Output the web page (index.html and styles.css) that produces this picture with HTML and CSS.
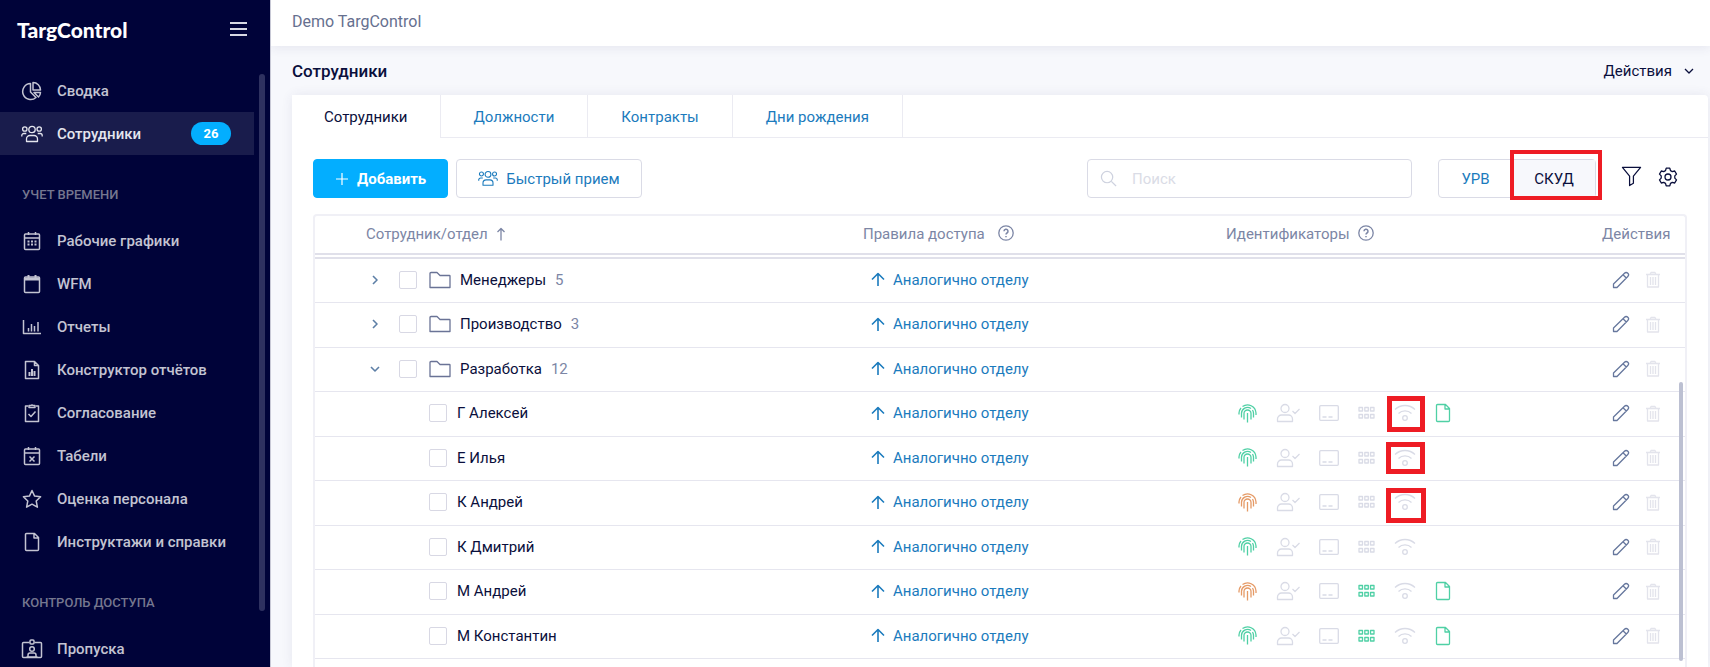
FILE: index.html
```html
<!DOCTYPE html>
<html lang="ru">
<head>
    <meta charset="UTF-8">
    <meta name="viewport" content="width=device-width, initial-scale=1.0">
    <title>Сотрудники - TargControl</title>
    <link rel="stylesheet" href="styles.css">
</head>
<body>
    <!-- icon set -->
    <svg class="sprite" aria-hidden="true">
        <symbol id="i-pie" viewBox="0 0 20 20"><path d="M8.5 2.5a8 8 0 1 0 5.5 14L8.500 11z"/><path d="M11 1.500v7.500h7.500a7.500 7.500 0 0 0-7.500-7.500z"/><path d="M12 11.500h6.500a7 7 0 0 1-2 4.500z"/></symbol>
        <symbol id="i-team" viewBox="0 0 22 18"><circle cx="11" cy="4.500" r="3.200"/><circle cx="3.800" cy="4" r="2.200"/><circle cx="18.200" cy="4" r="2.200"/><path d="M5.500 16.500v-2.500a3.500 3.500 0 0 1 3.500-3.500h4a3.500 3.500 0 0 1 3.500 3.500v2.500zM.8 11.500v-1a2 2 0 0 1 2-2h2.500M21.200 11.500v-1a2 2 0 0 0-2-2h-2.500"/></symbol>
        <symbol id="i-calendar" viewBox="0 0 18 20"><rect x="1.500" y="3" width="15" height="15.500" rx="1"/><path d="M1.500 7h15M5.500 1v3M12.500 1v3"/><path d="M4.500 10.500h9M4.500 13.500h9" stroke-width="2" stroke-dasharray="2 1.500"/></symbol>
        <symbol id="i-calendar-empty" viewBox="0 0 18 20"><rect x="1.500" y="3" width="15" height="15.500" rx="1"/><path d="M1.500 5h15" stroke-width="3"/><path d="M5.500 1v3M12.500 1v3" stroke-width="2"/></symbol>
        <symbol id="i-chart" viewBox="0 0 20 16"><path d="M1.500 1v13.500H19M6.500 9v3.500M9.500 5v7.500M12.500 7v5.500M16 3v9.500"/></symbol>
        <symbol id="i-report" viewBox="0 0 16 20"><path d="M1.500 1.500h9l4 4v13h-13zM10.500 1.500v4h4"/><path d="M5.500 12v4M8 9v7M10.500 11v5" stroke-width="2"/></symbol>
        <symbol id="i-clipboard" viewBox="0 0 16 20"><path d="M4 3H1.500v15.500h13V3H12"/><path d="M5 4.500v-2h2a1.200 1.200 0 0 1 2 0h2v2z"/><path d="M4.500 11l2.500 2.500 4.500-5"/></symbol>
        <symbol id="i-calendar-x" viewBox="0 0 18 20"><rect x="1.500" y="3" width="15" height="15.500" rx="1"/><path d="M1.500 7h15M5.500 1v3M12.500 1v3M6.500 10.500l5 5M11.500 10.500l-5 5"/></symbol>
        <symbol id="i-star" viewBox="0 0 20 20"><path d="M10 1.500l2.600 5.600 6 .7-4.400 4.200 1.200 6.200L10 15.200l-5.400 3 1.200-6.200L1.400 7.800l6-.7z"/></symbol>
        <symbol id="i-file" viewBox="0 0 16 20"><path d="M2.500 1.500h8l4 4v12a1 1 0 0 1-1 1h-11a1 1 0 0 1-1-1v-15a1 1 0 0 1 1-1zM10 1.500v4.500h4.500"/></symbol>
        <symbol id="i-badge" viewBox="0 0 22 20"><path d="M8.500 3.500H2.500a1 1 0 0 0-1 1v13a1 1 0 0 0 1 1h17a1 1 0 0 0 1-1v-13a1 1 0 0 0-1-1h-6"/><rect x="9" y="1" width="4" height="4" rx="1"/><circle cx="11" cy="10" r="2.300"/><path d="M7 17.500v-1.500a2 2 0 0 1 2-2h4a2 2 0 0 1 2 2v1.500M5.500 18h11"/></symbol>
        <symbol id="i-plus" viewBox="0 0 14 14"><path d="M7 1v12M1 7h12"/></symbol>
        <symbol id="i-search" viewBox="0 0 18 18"><circle cx="7.500" cy="7.500" r="6"/><path d="M12 12l5 5"/></symbol>
        <symbol id="i-filter" viewBox="0 0 22 22"><path d="M1.500 1.500h19l-7.500 9v7.500l-4 2.500v-10z"/></symbol>
        <symbol id="i-gear" viewBox="0 0 20 20"><path d="M8.200 1.200h3.600l.7 2.400 1.800 1 2.400-.6 1.800 3.100-1.700 1.800v2.200l1.700 1.800-1.800 3.100-2.400-.6-1.800 1-.7 2.400H8.200l-.7-2.400-1.800-1-2.400.6-1.800-3.100 1.700-1.800V8.900L1.500 7.100 3.300 4l2.400.6 1.800-1z"/><circle cx="10" cy="10" r="3"/></symbol>
        <symbol id="i-up" viewBox="0 0 14 15"><path d="M7 14V1.500M1 7.500l6-6 6 6"/></symbol>
        <symbol id="i-sort" viewBox="0 0 10 14"><path d="M5 13.500v-12M1.500 5L5 1.500 8.500 5"/></symbol>
        <symbol id="i-help" viewBox="0 0 16 16"><circle cx="8" cy="8" r="7.200"/><path d="M6 6.300a2 2 0 1 1 3 1.700c-.7.400-1 .8-1 1.500M8 11v1.300" stroke-width="1.500"/></symbol>
        <symbol id="i-right" viewBox="0 0 10 10"><path d="M3 1l4 4-4 4"/></symbol>
        <symbol id="i-down" viewBox="0 0 10 10"><path d="M1 3l4 4 4-4"/></symbol>
        <symbol id="i-folder" viewBox="0 0 22 18"><path d="M1 16.500v-14a1 1 0 0 1 1-1h6l3 3h9.500a.5.500 0 0 1 .5.500v11.500z"/></symbol>
        <symbol id="i-pencil" viewBox="0 0 18 18"><path d="M1.500 16.500v-3.500L12.500 2.200a2.200 2.200 0 0 1 3.300 3.300L5 16.500zM11 3.700l3.300 3.300"/></symbol>
        <symbol id="i-trash" viewBox="0 0 14 17"><path d="M0 3.500h14M4 3.500l1-2h4l1 2M1.500 3.500v12.500h11V3.500M4.500 6v8M7 6v8M9.500 6v8"/></symbol>
        <symbol id="i-finger" viewBox="0 0 19 19"><path d="M1 10.500V9a8.500 8.500 0 0 1 2-5M4.500 2.600A8.500 8.500 0 0 1 18 9v2M3.500 13.500V9.500a6 6 0 0 1 9.500-5M14.500 6a6 6 0 0 1 1 3.500v4M6 15.500V9.500a3.500 3.500 0 0 1 7 0v6M9.500 9v9.500"/></symbol>
        <symbol id="i-user" viewBox="0 0 24 20"><circle cx="9" cy="5.500" r="4"/><path d="M1.500 18.500v-2.500a4 4 0 0 1 4-4h7a4 4 0 0 1 4 4v2.500zM16.500 8l2.500 2.500 4.500-4.500"/></symbol>
        <symbol id="i-card" viewBox="0 0 20 18"><rect x=".7" y="1.700" width="18.600" height="14.600" rx="1"/><path d="M3.500 13h4M9.500 13h4"/></symbol>
        <symbol id="i-grid" viewBox="0 0 17 14"><rect x="1" y="1.500" width="3.500" height="3.500"/><rect x="6.800" y="1.500" width="3.500" height="3.500"/><rect x="12.500" y="1.500" width="3.500" height="3.500"/><rect x="1" y="8.500" width="3.500" height="3.500"/><rect x="6.800" y="8.500" width="3.500" height="3.500"/><rect x="12.500" y="8.500" width="3.500" height="3.500"/></symbol>
        <symbol id="i-wifi" viewBox="0 0 22 18"><path d="M1 5.500a14.500 14.500 0 0 1 20 0M4.500 9.500a9.300 9.300 0 0 1 13 0"/><circle cx="11" cy="14" r="2.300"/></symbol>
    </svg>

    <div class="app">
        <aside class="sidebar">
            <div class="brand">
                <span class="logo">TargControl</span>
                <button class="burger" aria-label="Меню"><span></span><span></span><span></span></button>
            </div>
            <nav class="menu">
                <a href="#" class="menu-item"><svg class="icon" width="20" height="20"><use href="#i-pie"/></svg>Сводка</a>
                <a href="#" class="menu-item active"><svg class="icon" width="22" height="18"><use href="#i-team"/></svg>Сотрудники<span class="badge">26</span></a>
                <h4 class="menu-title">Учет времени</h4>
                <a href="#" class="menu-item"><svg class="icon" width="18" height="20"><use href="#i-calendar"/></svg>Рабочие графики</a>
                <a href="#" class="menu-item"><svg class="icon" width="18" height="20"><use href="#i-calendar-empty"/></svg>WFM</a>
                <a href="#" class="menu-item"><svg class="icon" width="20" height="16"><use href="#i-chart"/></svg>Отчеты</a>
                <a href="#" class="menu-item"><svg class="icon" width="16" height="20"><use href="#i-report"/></svg>Конструктор отчётов</a>
                <a href="#" class="menu-item"><svg class="icon" width="16" height="20"><use href="#i-clipboard"/></svg>Согласование</a>
                <a href="#" class="menu-item"><svg class="icon" width="18" height="20"><use href="#i-calendar-x"/></svg>Табели</a>
                <a href="#" class="menu-item"><svg class="icon" width="20" height="20"><use href="#i-star"/></svg>Оценка персонала</a>
                <a href="#" class="menu-item"><svg class="icon" width="16" height="20"><use href="#i-file"/></svg>Инструктажи и справки</a>
                <h4 class="menu-title">Контроль доступа</h4>
                <a href="#" class="menu-item"><svg class="icon" width="22" height="20"><use href="#i-badge"/></svg>Пропуска</a>
            </nav>
            <div class="menu-scroll"></div>
        </aside>

        <main class="main">
            <header class="topbar">Demo TargControl</header>
            <div class="page-head">
                <h1>Сотрудники</h1>
                <button class="actions">Действия <svg class="icon" width="10" height="10"><use href="#i-down"/></svg></button>
            </div>

            <section class="card">
                <div class="tabs">
                    <a href="#" class="tab current">Сотрудники</a>
                    <a href="#" class="tab">Должности</a>
                    <a href="#" class="tab">Контракты</a>
                    <a href="#" class="tab">Дни рождения</a>
                </div>

                <div class="toolbar">
                    <button class="btn btn-primary"><svg class="icon" width="14" height="14"><use href="#i-plus"/></svg>Добавить</button>
                    <button class="btn"><svg class="icon" width="20" height="17"><use href="#i-team"/></svg>Быстрый прием</button>
                    <label class="search">
                        <svg class="icon" width="17" height="17"><use href="#i-search"/></svg>
                        <input type="text" placeholder="Поиск" aria-label="Поиск">
                    </label>
                    <div class="switch">
                        <button>УРВ</button>
                        <button class="on">СКУД</button>
                        <div class="mark mark-switch"></div>
                    </div>
                    <button class="tool" aria-label="Фильтр"><svg class="icon" width="21" height="21"><use href="#i-filter"/></svg></button>
                    <button class="tool" aria-label="Настройки"><svg class="icon" width="20" height="20"><use href="#i-gear"/></svg></button>
                </div>

                <div class="table-box">
                    <table>
                        <thead>
                            <tr>
                                <th class="col-name">Сотрудник/отдел <svg class="icon sort" width="10" height="14"><use href="#i-sort"/></svg></th>
                                <th class="col-rule">Правила доступа <svg class="icon help" width="16" height="16"><use href="#i-help"/></svg></th>
                                <th class="col-ids">Идентификаторы <svg class="icon help" width="16" height="16"><use href="#i-help"/></svg></th>
                                <th class="col-act">Действия</th>
                            </tr>
                        </thead>
                        <tbody id="rows"></tbody>
                    </table>
                    <div class="table-scroll"></div>
                </div>
            </section>
        </main>
    </div>

    <script src="script.js"></script>
</body>
</html>
```

FILE: script.js
```js
// departments have a count, employees have identifiers
const rows = [
    { name: 'Менеджеры', count: 5 },
    { name: 'Производство', count: 3 },
    { name: 'Разработка', count: 12, open: true },
    { name: 'Г Алексей', finger: 'green', file: true, mark: 'mark-a' },
    { name: 'Е Илья', finger: 'green', mark: 'mark-b' },
    { name: 'К Андрей', finger: 'orange', mark: 'mark-c' },
    { name: 'К Дмитрий', finger: 'green' },
    { name: 'М Андрей', finger: 'orange', grid: 'green', file: true },
    { name: 'М Константин', finger: 'green', grid: 'green', file: true }
];

function icon(id, width, height, cls) {
    return `<svg class="icon ${cls || ''}" width="${width}" height="${height}"><use href="#i-${id}"/></svg>`;
}

function nameCell(row) {
    const check = `<input type="checkbox" aria-label="${row.name}">`;
    if (row.count) {
        return `<div class="name">
            <button class="toggle" aria-label="Раскрыть">${icon(row.open ? 'down' : 'right', 10, 10)}</button>
            ${check}${icon('folder', 22, 18, 'folder')}<span>${row.name}</span><span class="count">${row.count}</span>
        </div>`;
    }
    return `<div class="name person">${check}<span>${row.name}</span></div>`;
}

function idsCell(row) {
    if (row.count) return '';
    return `<div class="ids">
        ${icon('finger', 19, 19, row.finger)}
        ${icon('user', 24, 20)}
        ${icon('card', 20, 18)}
        ${icon('grid', 17, 14, row.grid)}
        <span class="wifi">${icon('wifi', 22, 18)}${row.mark ? `<span class="mark ${row.mark}"></span>` : ''}</span>
        ${row.file ? icon('file', 16, 20, 'green') : ''}
    </div>`;
}

document.getElementById('rows').innerHTML = rows.map(row => `
    <tr>
        <td>${nameCell(row)}</td>
        <td><a href="#" class="rule">${icon('up', 14, 15)}Аналогично отделу</a></td>
        <td>${idsCell(row)}</td>
        <td><div class="row-actions">
            <button aria-label="Изменить">${icon('pencil', 18, 18)}</button>
            <button aria-label="Удалить" class="off">${icon('trash', 14, 17)}</button>
        </div></td>
    </tr>`).join('');
```

FILE: styles.css
```css
* {
    box-sizing: border-box;
}
body {
    margin: 0;
    font-family: Roboto, "Liberation Sans", sans-serif;
    font-size: 15px;
    color: #0a0f3c;
    background-color: #f7f8fc;
}
a {
    text-decoration: none;
}
button {
    padding: 0;
    border: none;
    background: none;
    font: inherit;
    color: inherit;
    cursor: pointer;
}
.sprite {
    display: none;
}
.icon {
    flex: none;
    fill: none;
    stroke: currentColor;
    stroke-width: 1.3;
    stroke-linejoin: round;
}
.app {
    display: flex;
    height: 100vh;
    overflow: hidden;
}

/* sidebar */
.sidebar {
    position: relative;
    flex: none;
    width: 271px;
    background-color: #000339;
    border-right: 1px solid #c8c9d6;
    color: #c3c4d2;
}
.brand {
    display: flex;
    align-items: center;
    justify-content: space-between;
    height: 58px;
    padding: 0 23px 0 17px;
    margin-bottom: 11px;
}
.logo {
    font-family: Lato, sans-serif;
    font-size: 21px;
    font-weight: 900;
    color: #fff;
}
.burger {
    display: flex;
    flex-direction: column;
    gap: 4px;
    width: 17px;
}
.burger span {
    height: 2px;
    background-color: #d8d9e4;
}
.menu-item {
    display: flex;
    align-items: center;
    width: 254px;
    height: 43px;
    padding: 0 23px 0 21px;
    font-weight: 500;
    color: #c3c4d2;
}
.menu-item .icon {
    width: 22px;
    margin-right: 14px;
    stroke-width: 1.5;
}
.menu-item.active {
    background-color: #191c4c;
    color: #e4e5ee;
}
.menu-item.active .icon {
    stroke-width: 1.3;
}
.badge {
    margin-left: auto;
    width: 40px;
    line-height: 23px;
    border-radius: 12px;
    background-color: #03aeff;
    color: #fff;
    font-size: 13px;
    font-weight: 700;
    text-align: center;
}
.menu-title {
    margin: 30px 0 14px 22px;
    font-size: 13px;
    line-height: 20px;
    font-weight: 500;
    text-transform: uppercase;
    color: #75778f;
}
.menu-scroll {
    position: absolute;
    top: 74px;
    bottom: 56px;
    right: 5px;
    width: 6px;
    border-radius: 3px;
    background-color: #2e3160;
}

/* content */
.main {
    display: flex;
    flex-direction: column;
    flex: 1;
    min-width: 0;
}
.topbar {
    height: 46px;
    padding: 0 21px;
    line-height: 43px;
    font-size: 16px;
    color: #66708f;
    background-color: #fff;
    box-shadow: 0 2px 10px rgba(60, 50, 110, 0.09);
}
.page-head {
    display: flex;
    align-items: center;
    justify-content: space-between;
    height: 49px;
    padding: 0 16px 0 21px;
}
h1 {
    margin: 0;
    font-size: 17px;
    font-weight: 500;
}
.actions {
    display: flex;
    align-items: center;
    gap: 12px;
}
.card {
    display: flex;
    flex-direction: column;
    flex: 1;
    margin: 0 2px 0 21px;
    background-color: #fff;
    border-radius: 4px 4px 0 0;
    box-shadow: 0 0 12px rgba(60, 50, 110, 0.09);
}
.tabs {
    display: flex;
    height: 43px;
    border-bottom: 1px solid #ebebf2;
}
.tab {
    padding: 0 33px;
    line-height: 44px;
    border-right: 1px solid #ebebf2;
    color: #1b7bbd;
}
.tab.current {
    height: 43px;
    padding: 0 32px;
    background-color: #fff;
    color: #0a0f3c;
}
.toolbar {
    display: flex;
    align-items: center;
    gap: 8px;
    padding: 21px 30px 16px 21px;
}
.btn {
    display: flex;
    align-items: center;
    gap: 8px;
    height: 39px;
    padding: 0 21px;
    border: 1px solid #dadbe6;
    border-radius: 4px;
    color: #1b7bbd;
}
.btn .icon {
    stroke-width: 1.2;
}
.btn-primary {
    border-color: #03aeff;
    background-color: #03aeff;
    color: #fff;
    font-weight: 700;
}
.search {
    display: flex;
    align-items: center;
    width: 325px;
    height: 39px;
    margin-left: auto;
    padding: 0 12px;
    border: 1px solid #dadbe6;
    border-radius: 4px;
    color: #ced2df;
}
.search input {
    flex: 1;
    min-width: 0;
    margin-left: 15px;
    padding: 0;
    border: none;
    outline: none;
    font: inherit;
}
.search input::placeholder {
    color: #dadce6;
}
.switch {
    position: relative;
    display: flex;
    height: 39px;
    margin: 0 17px 0 18px;
    border: 1px solid #dadbe6;
    border-radius: 4px;
}
.switch button {
    width: 73px;
    color: #1b7bbd;
}
.switch .on {
    width: 83px;
    border-left: 1px solid #dadbe6;
    background-color: #f7f8fc;
    color: #0a0f3c;
}
.tool {
    display: flex;
    margin-right: 8px;
    padding-bottom: 4px;
}
.tool:last-child {
    margin-right: 0;
}

/* red highlight frames */
.mark {
    position: absolute;
    border: 5px solid #ee1c24;
    pointer-events: none;
}
.mark-switch {
    top: -10px;
    right: -7px;
    width: 92px;
    height: 50px;
    border-width: 4px;
}
.mark-a {
    top: -8px;
    left: -7px;
    width: 38px;
    height: 36px;
}
.mark-b {
    top: -7px;
    left: -8px;
    width: 39px;
    height: 32px;
}
.mark-c {
    top: -5px;
    left: -8px;
    width: 40px;
    height: 35px;
}

/* table */
.table-box {
    position: relative;
    flex: 1;
    margin: 0 21px;
    border: 2px solid #f0f0f6;
    border-bottom: none;
    border-radius: 4px 4px 0 0;
}
table {
    width: 100%;
    table-layout: fixed;
    border-spacing: 0;
}
th {
    height: 43px;
    padding: 0 0 2px;
    border-bottom: 6px double #e0e0ea;
    text-align: left;
    font-weight: 400;
    color: #7c86a5;
}
.col-name {
    width: 548px;
    padding-left: 51px;
}
.col-ids {
    width: 376px;
}
.col-act {
    width: 83px;
}
.sort,
.help {
    vertical-align: -2px;
    margin-left: 5px;
}
.col-rule .help {
    margin-left: 10px;
}
td {
    height: 44px;
    padding: 0 0 2px;
    border-bottom: 1px solid #e6e6ef;
}
tr:nth-child(even) td {
    height: 45px;
}
.name {
    display: flex;
    align-items: center;
    padding-left: 55px;
}
.person {
    padding-left: 114px;
}
.toggle {
    display: flex;
    margin-right: 19px;
    color: #5d7fa6;
}
.toggle .icon {
    stroke-width: 1.6;
}
input[type="checkbox"] {
    appearance: none;
    flex: none;
    width: 18px;
    height: 18px;
    margin: 0 10px 0 0;
    border: 1px solid #d8d8e4;
    border-radius: 2px;
}
.name .folder {
    margin: 0 9px 0 2px;
    color: #6a7396;
}
.count {
    margin-left: 9px;
    color: #7c86a5;
}
.rule {
    display: flex;
    align-items: center;
    gap: 8px;
    padding-left: 8px;
    color: #1b7bbd;
}
.rule .icon {
    stroke-width: 1.6;
}
.ids {
    display: flex;
    align-items: center;
    gap: 19px;
    padding-left: 12px;
    color: #d9dbe6;
}
.wifi {
    position: relative;
    display: flex;
}
.green {
    color: #4fd0a5;
}
.orange {
    color: #e59a66;
}
.row-actions {
    display: flex;
    align-items: center;
    gap: 16px;
    padding-left: 10px;
    color: #66779d;
}
.row-actions button {
    display: flex;
}
.row-actions .off {
    color: #e3e4ec;
}
.table-scroll {
    position: absolute;
    right: 2px;
    top: 166px;
    bottom: 6px;
    width: 4px;
    border-radius: 2px;
    background-color: #bcc0d2;
}
```
